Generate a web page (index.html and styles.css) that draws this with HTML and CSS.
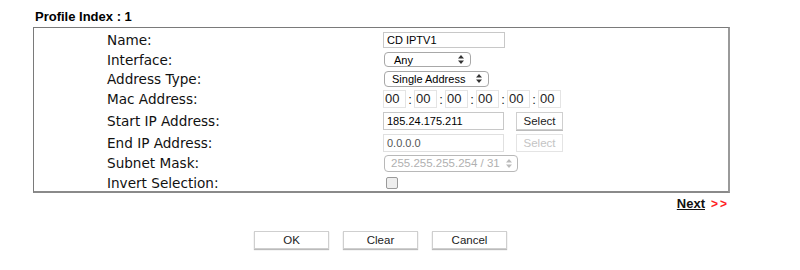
FILE: index.html
```html
<!DOCTYPE html>
<html>
<head>
<meta charset="utf-8">
<link rel="stylesheet" href="styles.css">
</head>
<body>
<div class="page">
  <div class="title">Profile Index : 1</div>
  <div class="box">
    <div class="row r-name">
      <div class="label">Name:</div>
      <div class="field"><input class="text w-name" type="text" value="CD IPTV1"></div>
    </div>
    <div class="row r-if">
      <div class="label">Interface:</div>
      <div class="field"><div class="sel w-if"><span>Any</span><svg class="arr" width="6" height="9" viewBox="0 0 6 9"><path d="M0 3.5 L3 0 L6 3.5Z M0 5.5 L3 9 L6 5.5Z" fill="#333"/></svg></div></div>
    </div>
    <div class="row r-at">
      <div class="label">Address Type:</div>
      <div class="field"><div class="sel w-at"><span>Single Address</span><svg class="arr" width="6" height="9" viewBox="0 0 6 9"><path d="M0 3.5 L3 0 L6 3.5Z M0 5.5 L3 9 L6 5.5Z" fill="#333"/></svg></div></div>
    </div>
    <div class="row r-mac">
      <div class="label">Mac Address:</div>
      <div class="field mac">
        <span class="mb">00</span><span class="colon">:</span>
        <span class="mb">00</span><span class="colon">:</span>
        <span class="mb">00</span><span class="colon">:</span>
        <span class="mb">00</span><span class="colon">:</span>
        <span class="mb">00</span><span class="colon">:</span>
        <span class="mb">00</span>
      </div>
    </div>
    <div class="row r-sip">
      <div class="label">Start IP Address:</div>
      <div class="field"><input class="text w-ip" type="text" value="185.24.175.211"><button class="btn-sel">Select</button></div>
    </div>
    <div class="row r-eip">
      <div class="label">End IP Address:</div>
      <div class="field"><input class="text w-ip dis" type="text" value="0.0.0.0"><button class="btn-sel dis">Select</button></div>
    </div>
    <div class="row r-sub">
      <div class="label">Subnet Mask:</div>
      <div class="field"><div class="sel w-sub dis"><span>255.255.255.254 / 31</span><svg class="arr" width="6" height="9" viewBox="0 0 6 9"><path d="M0 3.5 L3 0 L6 3.5Z M0 5.5 L3 9 L6 5.5Z" fill="#bbb"/></svg></div></div>
    </div>
    <div class="row r-inv">
      <div class="label">Invert Selection:</div>
      <div class="field"><span class="chk"></span></div>
    </div>
  </div>
  <div class="next"><a class="next-link" href="#">Next</a><span class="gt">&gt;&gt;</span></div>
  <div class="actions">
    <button class="act">OK</button>
    <button class="act">Clear</button>
    <button class="act">Cancel</button>
  </div>
</div>
</body>
</html>
```
FILE: styles.css
```css
html, body { margin: 0; padding: 0; background: #fff; }
body { font-family: "Liberation Sans", Arial, sans-serif; color: #000; }
.page { width: 800px; height: 270px; }
.title {
  font-weight: bold; font-size: 13px; line-height: 15px;
  padding: 9px 0 0 35px; height: 18px;
}
.box {
  margin-left: 33px; width: 697px; height: 166px; box-sizing: border-box;
  border-top: 1px solid #7a7a7a; border-left: 1px solid #7a7a7a;
  border-right: 2px solid #9a9a9a; border-bottom: 2px solid #8a8a8a;
  padding-top: 2px;
}
.row { display: grid; grid-template-columns: 349px 1fr; align-items: center; }
.r-name { height: 20px; }
.r-if { height: 19px; }
.r-at { height: 19px; }
.r-mac { height: 22px; }
.r-sip { height: 22px; }
.r-eip { height: 21px; }
.r-sub { height: 20px; }
.r-inv { height: 20px; }
.label {
  padding-left: 73px; font-family: "DejaVu Sans", Verdana, sans-serif;
  font-size: 13.6px; color: #111;
}
.field { display: flex; align-items: center; }
.text {
  box-sizing: border-box; height: 17px; margin: 0; padding: 0 3px;
  font-family: "Liberation Sans", Arial, sans-serif; font-size: 11px; color: #000;
  border: 1px solid #c8c8c8; background: #fff; outline: none;
}
.w-name { width: 122px; height: 16px; }
.w-ip { width: 121px; height: 18px; }
.text.dis { border-color: #e0e0e0; color: #555; }
.sel {
  box-sizing: border-box; display: flex; align-items: center; justify-content: space-between;
  height: 15px; margin-left: 1px; padding: 0 6px 0 9px;
  border: 1px solid #a8a8a8; border-radius: 4px; background: #fff;
  font-size: 11px; color: #000;
}
.w-if { width: 87px; }
.w-at { width: 105px; height: 16px; padding-left: 7px; }
.w-sub { width: 134px; height: 17px; padding: 0 5px 0 6px; color: #b0b0b0; border-color: #b8b8b8; font-size: 11.5px; }
.mac { height: 18px; }
.mb {
  box-sizing: border-box; width: 23px; height: 18px; border: 1px solid #e4e4e4;
  font-size: 13px; line-height: 16px; padding-left: 1px; color: #222;
}
.colon { width: 8px; text-align: center; font-size: 13px; color: #222; }
.btn-sel {
  box-sizing: border-box; margin: 0 0 0 12px; width: 47px; height: 18px; padding: 0;
  background: #fff; border: 1px solid #cfcfcf; box-shadow: 0 1px 0 #bbb;
  font-family: "Liberation Sans", Arial, sans-serif; font-size: 11.5px; color: #222;
}
.btn-sel.dis { color: #c4c4c4; border-color: #e4e4e4; box-shadow: none; }
.chk {
  display: block; box-sizing: border-box; width: 12px; height: 12px; margin-left: 3px;
  border: 1px solid #9a9a9a; border-radius: 2px; background: #eee;
}
.next {
  display: flex; justify-content: flex-end; align-items: baseline;
  width: 727px; height: 20px; padding-top: 3px; box-sizing: border-box;
}
.next-link {
  font-weight: bold; font-size: 13px; color: #111; text-decoration: underline;
}
.gt { color: #f22; font-size: 12px; font-weight: bold; margin-left: 6px; letter-spacing: 2px; margin-right: -2px; }
.actions { display: flex; padding-left: 254px; padding-top: 18px; gap: 14px; }
.act {
  box-sizing: border-box; width: 75px; height: 18px; margin: 0; padding: 0;
  background: #fff; border: 1px solid #cfcfcf; box-shadow: 0 1px 1px #bbb;
  font-family: "Liberation Sans", Arial, sans-serif; font-size: 11.5px; color: #222;
}
```
